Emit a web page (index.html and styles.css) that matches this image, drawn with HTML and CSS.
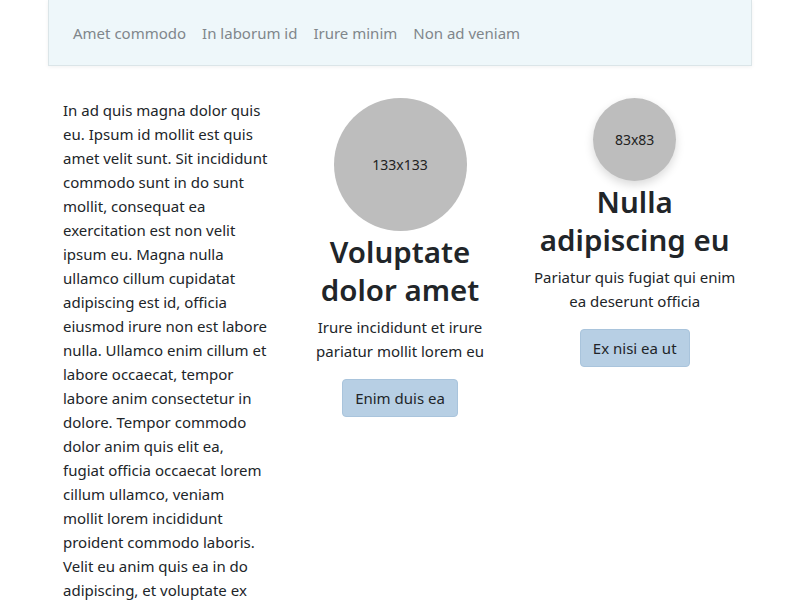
FILE: index.html
```html
<!DOCTYPE html>
<html lang="en">
<head>
<meta charset="utf-8">
<title>Page</title>
<link rel="stylesheet" href="styles.css">
</head>
<body>
<div class="container">
  <nav class="navbar">
    <a class="nav-link" href="#">Amet commodo</a>
    <a class="nav-link" href="#">In laborum id</a>
    <a class="nav-link" href="#">Irure minim</a>
    <a class="nav-link" href="#">Non ad veniam</a>
  </nav>
  <div class="row">
    <div class="col">
      <p class="lead-text">In ad quis magna dolor quis eu. Ipsum id mollit est quis amet velit sunt. Sit incididunt commodo sunt in do sunt mollit, consequat ea exercitation est non velit ipsum eu. Magna nulla ullamco cillum cupidatat adipiscing est id, officia eiusmod irure non est labore nulla. Ullamco enim cillum et labore occaecat, tempor labore anim consectetur in dolore. Tempor commodo dolor anim quis elit ea, fugiat officia occaecat lorem cillum ullamco, veniam mollit lorem incididunt proident commodo laboris. Velit eu anim quis ea in do adipiscing, et voluptate ex</p>
    </div>
    <div class="col center">
      <div class="avatar avatar-lg">133x133</div>
      <h2 class="title">Voluptate dolor amet</h2>
      <p class="desc">Irure incididunt et irure pariatur mollit lorem eu</p>
      <a class="btn" href="#">Enim duis ea</a>
    </div>
    <div class="col center">
      <div class="avatar avatar-sm">83x83</div>
      <h2 class="title">Nulla adipiscing eu</h2>
      <p class="desc">Pariatur quis fugiat qui enim ea deserunt officia</p>
      <a class="btn" href="#">Ex nisi ea ut</a>
    </div>
  </div>
</div>
</body>
</html>
```

FILE: styles.css
```css
* { box-sizing: border-box; }
html, body { margin: 0; padding: 0; }
body {
  font-family: "Noto Sans", "Open Sans", sans-serif;
  font-size: 15px;
  line-height: 24px;
  color: #212529;
  background: #fff;
}
.container {
  width: 704px;
  margin: 0 auto;
}
.navbar {
  display: flex;
  align-items: center;
  height: 66px;
  padding: 0 16px;
  background: #eef7fa;
  border: 1px solid #dbe5e8;
  border-top: none;
  box-shadow: 0 1px 4px rgba(0,0,0,0.06);
}
.nav-link {
  color: #80868b;
  text-decoration: none;
  padding: 0 8px;
  font-size: 15px;
}
.row {
  display: flex;
  margin-top: 32px;
}
.col {
  flex: 1 1 0;
  padding: 0 15px;
}
.lead-text { margin: 0; }
.center {
  display: flex;
  flex-direction: column;
  align-items: center;
  text-align: center;
}
.avatar {
  border-radius: 50%;
  background: #bdbdbd;
  display: flex;
  align-items: center;
  justify-content: center;
  font-size: 14px;
  color: #222;
}
.avatar-lg { width: 133px; height: 133px; }
.avatar-sm { width: 83px; height: 83px; box-shadow: 0 4px 10px rgba(0,0,0,0.15); }
.title {
  margin: 2px 0 6px;
  font-size: 29.5px;
  line-height: 38px;
  font-weight: 600;
}
.desc { margin: 0 0 16px; }
.btn {
  display: inline-block;
  padding: 6px 12px;
  line-height: 24px;
  background: #b7cfe4;
  border: 1px solid #a9c4dc;
  border-radius: 4px;
  color: #212529;
  text-decoration: none;
}
```
